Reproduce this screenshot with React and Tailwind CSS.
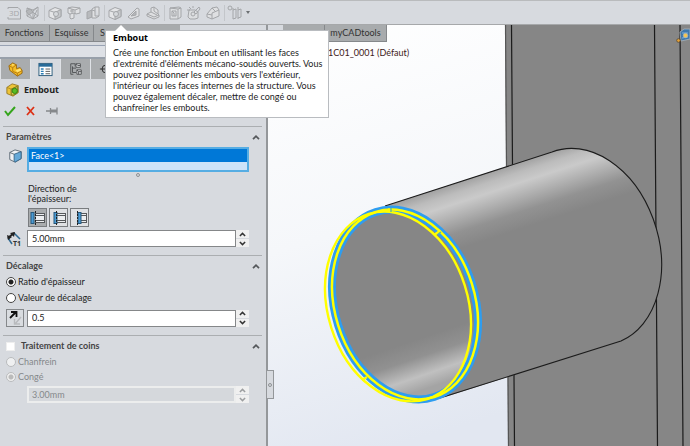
import { useState } from "react";
import clsx from "clsx";

function Cube({ className = "", children, base = "#e4e5e7", side = "#c6c8cb", stroke = "#a4a6a9" }) {
  return (
    <svg viewBox="0 0 16 16" className={clsx("size-4", className)} aria-hidden="true" strokeLinejoin="round">
      <path d="M2 5.500 8 2.500l6 2v7l-6 3-6-2.500z" fill={base} stroke={stroke} />
      <path d="m8 7.500 6-3v7l-6 3z" fill={side} stroke={stroke} />
      <path d="m2 5.500 6 2" fill="none" stroke={stroke} />
      {children}
    </svg>
  );
}

const toolStroke = { fill: "none", stroke: "#a4a6a9", strokeWidth: 1, strokeLinejoin: "round" };

function ToolIcon({ kind }) {
  if (kind === "embout" || kind === "soudure")
    return (
      <Cube>
        <circle cx="9" cy="9" r="2.500" fill="#d6d9dc" stroke="#a4a6a9" />
      </Cube>
    );
  return (
    <svg viewBox="0 0 16 16" className="size-4" aria-hidden="true" {...toolStroke}>
      {kind === "3d" && (
        <>
          <path d="M2 4V2.500h10L14.500 5v9H2V12" />
          <text x="3" y="11" fill="#a4a6a9" stroke="none" fontSize="8" fontFamily="Open Sans, sans-serif">3D</text>
        </>
      )}
      {kind === "mesh" && (
        <>
          <path d="m2 3 6 2 5-3v9l-5 3-6-3zM8 5v9M2 3l11 8M13 2 2 11M4 9l4 5 4-9" />
          <path d="m1 6 4-2 3 3-4 3z" fill="#b5b7ba" />
        </>
      )}
      {kind === "profile" && (
        <>
          <path d="m2 3 4-1 8 1v5l-4 1-2-1v5l-3 1-1-1V9L2 8z" fill="#e1e2e4" />
          <path d="M2 3l7 2v4M9 5l5-2M4 9l4-1M5 5v2h2V5z" />
        </>
      )}
      {kind === "extrude" && (
        <>
          <path d="m2 7 5-2v7l-5 2z" fill="#b8babd" />
          <path d="m7 4 3-2h4v9l-3 2H7zM10 2v9h4M7 5l3 1" fill="#dfe0e2" />
        </>
      )}
      {kind === "gusset" && (
        <>
          <path d="M2 12 11 3l2 1v7l-8 3z" fill="#dedfe1" />
          <path d="m5 11 5-5v4z" fill="#b5b7ba" />
        </>
      )}
      {kind === "bead" && (
        <>
          <path d="m2 9 4-2V3l3-1 4 3v4l1 1v2l-5 2-7-3z" fill="#dfe0e2" />
          <path d="m6 7 6 3M2 9l7 3 5-2M9 2v4l4 3" />
        </>
      )}
      {kind === "cut" && (
        <>
          <path d="m3 3 9-1 2 1v9l-3 2H3z" fill="#dcdee0" />
          <path d="M3 3l8 1v10M11 4l3-1M5 6h4v5H5zM5 6l2 2v3" />
        </>
      )}
      {kind === "hole" && (
        <>
          <path d="M3 5h6l3 2v6l-3 1H4L2 12z" fill="#dcdee0" />
          <path d="m8 7 5-5 1 2-4 5zM3 2l2 2M7 1v2M1 5h3" />
          <circle cx="7" cy="9" r="2" />
        </>
      )}
      {kind === "chamfer" && (
        <>
          <path d="m2 9 5-6 5-1 2 3v6l-7 3-5-2z" fill="#dfe0e2" />
          <path d="m7 8 7-3M2 9l5 1v4M7 8v2M7 3l3 3" />
        </>
      )}
      {kind === "plane" && (
        <>
          <circle cx="3" cy="3" r="2" />
          <path d="M6 3v11M6 5l3-1v9l-3 1M11 2v12M11 5l3-1v8l-3 1" />
        </>
      )}
    </svg>
  );
}

function Toolbar() {
  const groups = [["3d", "mesh"], ["soudure", "profile", "extrude"], ["embout", "gusset", "bead"], ["cut", "hole", "chamfer"], ["plane"]];
  return (
    <header className="flex h-[25px] shrink-0 items-center border-t border-b border-t-[#b9bbbd] border-b-[#a6a8aa] bg-[#d7dadf] px-[5px]">
      {groups.map((g, i) => (
        <div key={g[0]} className={clsx("flex items-center gap-[3px] px-[1px]", i > 0 && "ml-[2px] border-l border-[#c3c6ca] pl-[2px]")}>
          {g.map((k) => (
            <button key={k} type="button" aria-label={k} className="flex">
              <ToolIcon kind={k} />
            </button>
          ))}
        </div>
      ))}
      <svg viewBox="0 0 6 4" className="ml-px h-1 w-1.5" aria-hidden="true"><path d="M1 0h4L3 3z" fill="#6d7073" /></svg>
    </header>
  );
}

function Tooltip() {
  return (
    <div role="tooltip" className="absolute top-[30px] left-[105px] z-10 w-[224px] border border-[#b9bcc0] bg-white pt-px pr-1 pb-[4px] pl-[7px] leading-[11px] text-[#1d1d1d]">
      <svg viewBox="0 0 12 6" className="absolute -top-[6px] left-[9px] h-1.5 w-3" aria-hidden="true"><path d="M0 6 6 0l6 6z" fill="#fff" /></svg>
      <strong className="block pb-[4px] font-['Open_Sans',sans-serif] font-bold text-black">Embout</strong>
      <p className="whitespace-nowrap">
        Crée une fonction Embout en utilisant les faces<br />
        d'extrémité d'éléments mécano-soudés ouverts. Vous<br />
        pouvez positionner les embouts vers l'extérieur,<br />
        l'intérieur ou les faces internes de la structure. Vous<br />
        pouvez également décaler, mettre de congé ou<br />
        chanfreiner les embouts.
      </p>
    </div>
  );
}

function Chevron({ down = false, className }) {
  return (
    <svg viewBox="0 0 8 5" className={clsx(className, down && "rotate-180")} aria-hidden="true">
      <path d="M1 4.200 4 1.200l3 3" fill="none" stroke="currentColor" strokeWidth="1.700" />
    </svg>
  );
}

function Section({ title, className, children }) {
  return (
    <section className={clsx("ml-[3px] mr-[4px] border-t border-[#abaeb1] pr-[13px] pl-[3px]", className)}>
      <div className="flex h-[20px] items-center justify-between">
        <h3 className="flex items-center font-bold text-[#444]">{title}</h3>
        <button type="button" aria-label="Réduire" className="-mr-[11px] text-[#55585b]"><Chevron className="h-[5px] w-2" /></button>
      </div>
      {children}
    </section>
  );
}

function Spin({ label, initial, disabled = false }) {
  const [value, setValue] = useState(initial);
  const unit = initial.endsWith("mm") ? "mm" : "";
  const step = (d) => setValue(((parseFloat(value) || 0) + d).toFixed(unit ? 2 : 1) + unit);
  return (
    <div className="flex h-[17px] min-w-0 flex-1">
      <input
        aria-label={label}
        value={value}
        disabled={disabled}
        onChange={(e) => setValue(e.target.value)}
        className="min-w-0 flex-1 border border-[#858789] bg-white px-[4px] text-[#222] outline-none disabled:border-2 disabled:border-[#eceded] disabled:bg-[#d5d8dc] disabled:px-[3px] disabled:text-[#85888b]"
      />
      <div className={clsx("flex w-[13px] flex-col gap-px", disabled ? "text-[#9c9ea0]" : "text-[#333]")}>
        <button type="button" disabled={disabled} aria-label={"Augmenter " + label} onClick={() => step(0.1)} className="flex flex-1 items-center justify-center bg-[#f0f0f0]"><Chevron className="h-[5px] w-[7px]" /></button>
        <button type="button" disabled={disabled} aria-label={"Diminuer " + label} onClick={() => step(-0.1)} className="flex flex-1 items-center justify-center bg-[#f0f0f0]"><Chevron down className="h-[5px] w-[7px]" /></button>
      </div>
    </div>
  );
}

function Radio({ name, label, defaultChecked, disabled }) {
  return (
    <label className={clsx("flex items-center gap-[2px]", disabled ? "text-[#85888b]" : "text-[#222]")}>
      <input
        type="radio"
        name={name}
        defaultChecked={defaultChecked}
        disabled={disabled}
        className="size-[10px] appearance-none rounded-full border border-[#444] bg-white checked:bg-[radial-gradient(circle,#222_0_2px,#fff_3px)] disabled:border-[#b9bbbd] disabled:bg-[#eff0f1] disabled:checked:bg-[radial-gradient(circle,#bbb_0_2px,#eee_3px)]"
      />
      {label}
    </label>
  );
}

function DirectionIcon({ shift }) {
  return (
    <svg viewBox="0 0 16 16" className="size-[16px]" aria-hidden="true">
      <path d="M6 3h8.500v9.500H6z" fill="#eceef0" />
      <path d="M5 3.500h10M5 5.500h10M5 10.500h10M5 12.500h10M14.500 3v10" fill="none" stroke="#56595c" />
      <rect x={shift} y="2.500" width="3" height="11" fill="#4b9bd4" stroke="#26587d" />
      <path d="M5.500 1v14" stroke="#222" strokeDasharray="2 1" />
    </svg>
  );
}

function PanelTabs() {
  return (
    <nav className="flex h-[20px] gap-px bg-[#dfe2e6] pl-px" aria-label="Gestionnaire">
      <button type="button" aria-label="Arbre" className="flex w-[29px] items-center justify-center bg-[#a9acae]">
        <svg viewBox="0 0 16 16" className="size-[15px]" aria-hidden="true" strokeLinejoin="round">
          <path d="m1 4 4-3 4 2v4l4-1 2 3v3l-5 3-8-6z" fill="#f5bd24" stroke="#9a6910" />
          <path d="m1 4 4 2 4-3M5 6v4l5 2 5-3M10 12v3" fill="none" stroke="#b67c12" />
          <path d="m4 3 1-1 2 1-2 1zM8 9l5-2 1 2-4 2z" fill="#ffe477" />
        </svg>
      </button>
      <button type="button" aria-label="Propriétés" className="flex w-[29px] items-center justify-center bg-[#d7dadf]">
        <svg viewBox="0 0 16 16" className="size-[15px]" aria-hidden="true">
          <rect x="1" y="1.500" width="14" height="13" fill="#fff" stroke="#285878" />
          <path d="M1 2h14v3H1z" fill="#286b99" />
          <path d="M3 7.500h3M3 10h3M3 12.500h3" stroke="#2a7db5" strokeWidth="1.500" />
          <path d="M8 7.500h5M8 10h5M8 12.500h5" stroke="#555" />
        </svg>
      </button>
      <button type="button" aria-label="Configurations" className="flex w-[29px] items-center justify-center bg-[#a9acae]">
        <svg viewBox="0 0 16 16" className="size-[14px]" aria-hidden="true" fill="none" stroke="#4c4e50">
          <path d="M5 14H2V2h5v3M4 5v7h4M4 7h4" />
          <path d="M8 2h5v4H8zM9 9h5v5H9z" fill="#dadcde" />
          <path d="m8 2 2 2h3M9 9l2 2h3M11 11v3" />
        </svg>
      </button>
      <button type="button" aria-label="Cotations" className="flex w-[29px] items-center justify-center bg-[#a9acae]">
        <svg viewBox="0 0 16 16" className="size-[14px]" aria-hidden="true" fill="none" stroke="#222"><circle cx="8" cy="8" r="4.500" /><path d="M8 1v14M1 8h14" /></svg>
      </button>
      <div className="flex-1 bg-[#a9acae]" />
    </nav>
  );
}

function PropertyPanel() {
  return (
    <aside className="relative z-[2] flex w-[268px] shrink-0 flex-col border-r-2 border-[#94979a] bg-[#d7dadf]">
      <nav className="flex h-[17px] w-[180px] border-b border-[#85888b] bg-[#a8abad] text-[#333]">
        <button type="button" className="w-[50px] border-r border-[#85888b] pr-px">Fonctions</button>
        <button type="button" className="w-[44px] border-r border-[#85888b]">Esquisse</button>
        <button type="button" aria-label="Surfaces" className="flex-1 pl-[6px] text-left">S</button>
      </nav>
      <div className="h-[4px] border-b border-[#98a2b3]" />
      <div className="h-[13px] border-b-2 border-[#98a0aa] bg-[#dee1e6]" />
      <PanelTabs />
      <div className="flex h-[22px] items-center gap-[4px] pl-[6px]">
        <svg viewBox="0 0 16 16" className="size-[14px]" aria-hidden="true" strokeLinejoin="round">
          <path d="m1 5 6-4 7 2v8l-6 4-7-3z" fill="#eec438" stroke="#93751c" />
          <path d="m1 5 5 2 8-4M6 7v7" fill="none" stroke="#a88824" />
          <path d="m6 7 7-3v7l-5 3-2-1z" fill="#e9d14a" stroke="#6f7620" />
          <circle cx="10" cy="9" r="3" fill="#58bc25" stroke="#2e7f14" />
        </svg>
        <h2 className="font-['Open_Sans',sans-serif] font-bold text-[#222]">Embout</h2>
      </div>
      <div className="flex h-[25px] items-start gap-[9px] pt-[4px] pl-[4px]">
        <button type="button" aria-label="OK"><svg viewBox="0 0 12 12" className="size-3" aria-hidden="true"><path d="m1 6 3 4 7-8" fill="none" stroke="#35a51c" strokeWidth="2" /></svg></button>
        <button type="button" aria-label="Annuler"><svg viewBox="0 0 12 12" className="size-3" aria-hidden="true"><path d="m2 2 7 8M9 2l-7 8" fill="none" stroke="#dc3015" strokeWidth="1.800" /></svg></button>
        <button type="button" aria-label="Garder visible"><svg viewBox="0 0 12 12" className="size-3" aria-hidden="true"><path d="M0 6h4M4.500 3v6M11 2.500v7" stroke="#85888b" strokeWidth="1.300" /><path d="M5 4.500h6v3H5z" fill="#85888b" /></svg></button>
      </div>

      <Section title="Paramètres" className="h-[129px]">
        <div className="flex">
          <svg viewBox="0 0 16 16" className="mt-[2px] mr-[5px] ml-[2px] size-[14px] shrink-0" aria-hidden="true" strokeLinejoin="round">
            <path d="m2 4 6-3 7 2v8l-7 4-6-3z" fill="#f0f2f4" stroke="#55626e" />
            <path d="m7 6 8-3v8l-7 4-1-1z" fill="#66a9d7" stroke="#356285" />
            <path d="m2 4 5 2" fill="none" stroke="#55626e" />
          </svg>
          <div className="h-[25px] flex-1 border-2 border-[#56ade3] bg-[#cde3f9]">
            <button type="button" className="block h-[13px] w-full bg-[#0078d7] px-[2px] text-left leading-[12px] text-white">Face&lt;1&gt;</button>
          </div>
        </div>
        <div className="mx-auto mt-px size-1 translate-x-[10px] rounded-full border border-[#8e9194]" />
        <div className="pt-[7px] pl-[22px] leading-[10px] text-[#222]">
          <p>Direction de<br />l'épaisseur:</p>
          <div className="mt-[4px] flex gap-[2px]">
            {[1, 3, 6].map((shift, i) => (
              <button key={shift} type="button" aria-label={"Direction " + (i + 1)} aria-pressed={i === 0} className={clsx("flex size-[19px] items-center justify-center border border-[#797c7f]", i === 0 ? "bg-[#a9acae]" : "bg-[#dfe1e4]")}>
                <DirectionIcon shift={shift} />
              </button>
            ))}
          </div>
        </div>
        <div className="mt-[3px] flex items-center">
          <svg viewBox="0 0 16 16" className="mr-[5px] size-[16px] shrink-0" aria-hidden="true">
            <path d="m2 7 4 6M8 2l6 6" fill="none" stroke="#2d6790" strokeWidth="1.500" />
            <path d="m2 7 6-5" fill="none" stroke="#222" strokeWidth="2" />
            <path d="m1 4 1 5 4-3zM9 1 4 2l4 4z" fill="#222" />
            <text x="7" y="15" fontSize="7" fontWeight="bold" fill="#333" fontFamily="Open Sans, sans-serif">T1</text>
          </svg>
          <Spin label="Épaisseur" initial="5.00mm" />
        </div>
      </Section>

      <Section title="Décalage" className="h-[80px]">
        <div className="flex flex-col gap-[4px]">
          <Radio name="offset" label="Ratio d'épaisseur" defaultChecked />
          <Radio name="offset" label="Valeur de décalage" />
        </div>
        <div className="mt-[5px] flex items-center gap-[3px]">
          <button type="button" aria-label="Inverser" className="flex size-[18px] items-center justify-center border border-[#85888b] bg-[#d9dce0]">
            <svg viewBox="0 0 16 16" className="size-[16px]" aria-hidden="true" fill="none" strokeWidth="1.800">
              <path d="m14 7-6 7M7.500 9v5H13" stroke="#b8babd" strokeWidth="1.400" /><path d="m3 8 6-6M4 2h5.500v5" stroke="#111" />
            </svg>
          </button>
          <Spin label="Ratio" initial="0.5" />
        </div>
      </Section>

      <Section
        title={
          <label className="flex items-center gap-[6px]">
            <input type="checkbox" className="size-[9px] appearance-none border border-[#eee] bg-white checked:bg-[#0078d7]" />
            Traitement de coins
          </label>
        }
      >
        <div className="flex flex-col gap-[3px]">
          <Radio name="corner" label="Chanfrein" disabled />
          <Radio name="corner" label="Congé" defaultChecked disabled />
        </div>
        <div className="mt-[3px] flex pl-[21px]"><Spin label="Rayon" initial="3.00mm" disabled /></div>
      </Section>

      <button type="button" aria-label="Replier le panneau" className="absolute top-[345px] -right-[8px] flex h-[29px] w-[7px] items-center justify-center border border-l-0 border-[#94979a] bg-[#d7dadf]">
        <span className="size-1 rounded-full border border-[#8e9194]" />
      </button>
    </aside>
  );
}

function Model() {
  return (
    <svg viewBox="268 25 422 421" preserveAspectRatio="xMinYMin slice" className="absolute inset-0 size-full" role="img" aria-label="Tube soudé sur un montant">
      <defs>
        <linearGradient id="sky" x1="0" y1="0" x2="0.300" y2="1"><stop offset="0" stopColor="#ffffff" /><stop offset=".5" stopColor="#f5f7fa" /><stop offset="1" stopColor="#e2e7f1" /></linearGradient>
        <linearGradient id="tube" gradientUnits="userSpaceOnUse" x1="470" y1="178" x2="532" y2="368">
          <stop offset="0" stopColor="#a0a0a0" /><stop offset=".05" stopColor="#bcbcbc" /><stop offset=".1" stopColor="#cacaca" /><stop offset=".16" stopColor="#b2b2b2" /><stop offset=".24" stopColor="#929292" /><stop offset=".32" stopColor="#868686" />
        </linearGradient>
        <linearGradient id="bore" gradientUnits="userSpaceOnUse" x1="430" y1="335" x2="446" y2="382" gradientTransform="rotate(17.500 405 304.500)">
          <stop offset="0" stopColor="#868686" /><stop offset=".35" stopColor="#919191" /><stop offset=".72" stopColor="#c0c0c0" /><stop offset="1" stopColor="#a4a4a4" />
        </linearGradient>
      </defs>
      <rect x="268" y="25" width="422" height="421" fill="url(#sky)" />
      <path d="M505 25H1400V446H508z" fill="#868686" />
      <g fill="none" stroke="#1b1b1b" strokeWidth="1.200">
        <path d="m505.500 25 3 421" stroke="#555" />
        <path d="m511.500 25 3 421M654.500 25l3 421M680 25l3 421" />
      </g>
      <path d="M385 206 552 152A73 100.700-17.500 0 1 621 341L445 397z" fill="url(#tube)" />
      <path d="M385 206 552 152A73 100.700-17.500 0 1 621 341L440 398" fill="none" stroke="#1b1b1b" strokeWidth="1.100" />
      <g fill="none">
        <ellipse cx="405" cy="304.500" rx="70" ry="97" transform="rotate(-17.500 405 304.500)" fill="url(#bore)" stroke="#2e9df0" strokeWidth="8" />
        <ellipse cx="405" cy="304.500" rx="70" ry="97" transform="rotate(-17.500 405 304.500)" stroke="#ffff00" strokeWidth="2.500" />
        <ellipse cx="398" cy="306.500" rx="70" ry="97" transform="rotate(-17.500 398 306.500)" stroke="#ffff00" strokeWidth="2.400" />
        <path d="m388 209 3 2M434 235l6-4M362 380l5-3" stroke="#ffff00" strokeWidth="2.500" />
        <path d="M391 208v4M438 234l3-2" stroke="#5dbb9d" strokeWidth="1.500" />
      </g>
      <g stroke="#a9b4bd" strokeWidth=".8">
        <path d="m680 32 4-3h6v10l-9 2z" fill="#3f78ac" />
        <path d="M682 33h6M682 38l6-1" stroke="#8cc0ea" />
        <circle cx="685.500" cy="35.500" r="2.200" fill="#f8c64d" />
        <circle cx="678.500" cy="40.500" r="1.800" fill="#e6a33a" stroke="#5c4a30" />
      </g>
    </svg>
  );
}

export default function App() {
  return (
    <div className="relative flex min-h-screen flex-col bg-[#d7dadf] font-[Lato,'Open_Sans',sans-serif] text-[9px] leading-[12px]">
      <Toolbar />
      <main className="flex flex-1">
        <PropertyPanel />
        <section className="relative min-w-0 flex-1 overflow-hidden">
          <Model />
          <div className="relative flex flex-col items-start">
            <nav className="flex h-[17px] text-[#333]">
              <span className="w-[15px] bg-[#d7dadf]" />
              <span className="w-[42px] border-r border-[#85888b] bg-[#a8abad]" />
              <button type="button" className="w-[62px] border-r border-b border-[#85888b] bg-[#a8abad]">myCADtools</button>
            </nav>
            <p className="pt-[5px] pl-[60px] text-[#3d2020]">1C01_0001 (Défaut)</p>
          </div>
        </section>
      </main>
      <Tooltip />
    </div>
  );
}
